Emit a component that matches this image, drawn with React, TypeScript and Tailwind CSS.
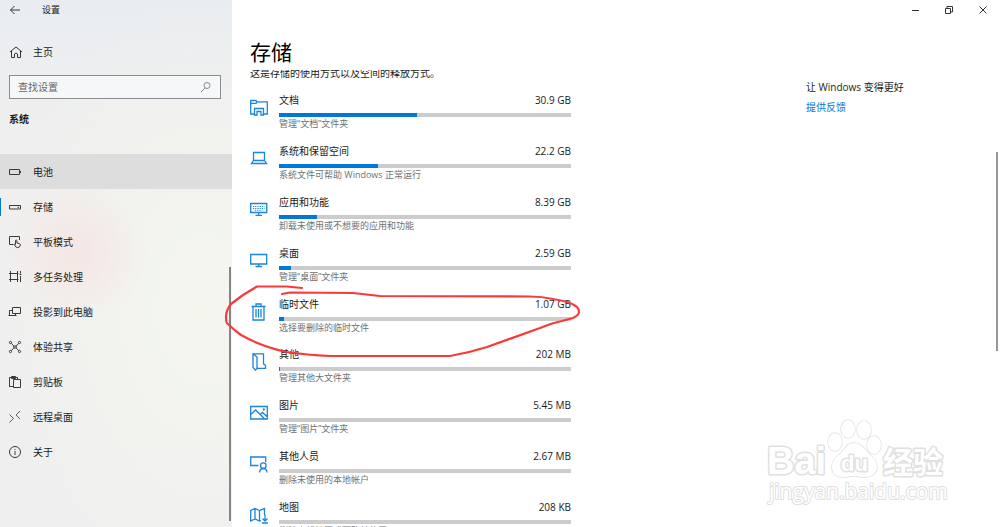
import React, { useState } from "react";

const navItems = [
  { id: "battery", label: "电池" },
  { id: "storage", label: "存储" },
  { id: "tablet", label: "平板模式" },
  { id: "multitask", label: "多任务处理" },
  { id: "project", label: "投影到此电脑" },
  { id: "share", label: "体验共享" },
  { id: "clipboard", label: "剪贴板" },
  { id: "remote", label: "远程桌面" },
  { id: "about", label: "关于" },
];

const storageItems = [
  { id: "documents", label: "文档", size: "30.9 GB", percent: 47.4, hint: "管理“文档”文件夹" },
  { id: "system", label: "系统和保留空间", size: "22.2 GB", percent: 34, hint: "系统文件可帮助 Windows 正常运行" },
  { id: "apps", label: "应用和功能", size: "8.39 GB", percent: 12.9, hint: "卸载未使用或不想要的应用和功能" },
  { id: "desktop", label: "桌面", size: "2.59 GB", percent: 4.1, hint: "管理“桌面”文件夹" },
  { id: "temp", label: "临时文件", size: "1.07 GB", percent: 1.8, hint: "选择要删除的临时文件" },
  { id: "other", label: "其他", size: "202 MB", percent: 0.3, hint: "管理其他大文件夹" },
  { id: "pictures", label: "图片", size: "5.45 MB", percent: 0, hint: "管理“图片”文件夹" },
  { id: "people", label: "其他人员", size: "2.67 MB", percent: 0, hint: "删除未使用的本地帐户" },
  { id: "maps", label: "地图", size: "208 KB", percent: 0, hint: "删除离线地图或更改其位置" },
];

const NavIcon = ({ id }: { id: string }) => (
  <svg
    viewBox="0 0 14 14"
    className="size-3.5 shrink-0"
    fill="none"
    stroke="#3a3a3a"
    strokeWidth="1"
    aria-hidden="true"
  >
    {id === "battery" && <path d="M1.5 4.5h10v5h-10zM12.5 6v2" />}
    {id === "storage" && <path d="M1.5 5.5h11v3.500h-11zM9.500 7.300h1.500" />}
    {id === "tablet" && (
      <path d="M5.500 9.500h-4v-8h10v3.500M7.500 9.500V5.500q.7-1 1.400 0V8l2.800.7q.8.3.6 1.300-.3 2.500-2.500 2.700-2.200 0-3.600-3.200.5-.8 1.300 0" />
    )}
    {id === "multitask" && <path d="M2.500 1v11M9.500 1v11M1 3.500h9.500M1 9.500h9.500M12.500 1v2.500M12.500 6v6M11.500 4.500h2" />}
    {id === "project" && <path d="M4.500 8.500v-6h8v6zM4.500 5.500h-3v4.500M7.500 8.500V10M.5 10.500h8" />}
    {id === "share" && (
      <>
        <path d="M3.300 3.300l2.500 2.700h2.400l2.500-2.700M3.300 10.700l2.500-2.700h2.400l2.500 2.700M5.800 6v2M8.200 6v2" />
        <circle cx="2.500" cy="2.500" r="1.100" />
        <circle cx="11.500" cy="2.500" r="1.100" />
        <circle cx="2.500" cy="11.500" r="1.100" />
        <circle cx="11.500" cy="11.500" r="1.100" />
      </>
    )}
    {id === "clipboard" && <path d="M5.500 11.500h-4v-9h8V4.500M3.500 3.500v-2h4v2zM5.500 4.500h7v8h-7z" />}
    {id === "remote" && <path d="M1.500 4.500l4 4-4 4M12 1L8 5l4 4" strokeWidth=".8" />}
    {id === "about" && (
      <>
        <circle cx="7" cy="7" r="5.500" />
        <path d="M7 6v4M7 4v1" />
      </>
    )}
  </svg>
);

const StorageIcon = ({ id }: { id: string }) => (
  <svg
    viewBox="0 0 18 18"
    className="mt-1.5 size-[18px] shrink-0"
    fill="none"
    stroke="#1b84dc"
    strokeWidth="1.3"
    aria-hidden="true"
  >
    {id === "documents" && (
      <path d="M4 15H.7V1.500H6l1 1.300h10.300V15H14M.7 4.300H6l1-1.500M4.500 16V9.500h9V16H11v-3.500H7V16z" />
    )}
    {id === "system" && <path d="M3.500 10.500v-8h11v8zM3.500 10.500l-2 3h15l-2-3" />}
    {id === "apps" && (
      <>
        <path d="M.7 2.500h16v9h-16zM8.700 11.500V14M5.500 14.300h6.500" />
        <path d="M3 5.500h11.500M3 7.500h11.500M5 9.300h7.500" strokeDasharray="1.200 1" strokeWidth="1" />
      </>
    )}
    {id === "desktop" && <path d="M.7 2.500h16v9.500h-16zM8.700 12v2.500M5.500 14.500h6.500" />}
    {id === "temp" && (
      <path d="M1.500 3.500h14M6 3.500V1h5v2.500M3 3.500v13.500h11V3.500M6 6v8.500M8.500 6v8.500M11 6v8.500" />
    )}
    {id === "other" && <path d="M3 .8h10.500v10l2 1.500v3H6.500M3 .8L7 4v11.500L5.500 17 3 14.500z" />}
    {id === "pictures" && (
      <>
        <path d="M.7 2.500h16.600V15H.7zM.7 10.500l5-4.500 9 9M10.500 10.500l2-2 5 4.500" />
        <circle cx="13.800" cy="5.500" r=".5" />
      </>
    )}
    {id === "people" && (
      <>
        <path d="M8.500 10.500H.7V2h15v5M9.500 17.500q.5-4 3.800-4t3.800 4" />
        <circle cx="13.300" cy="10.700" r="2.800" />
      </>
    )}
    {id === "maps" && (
      <path d="M11 14.500L9.500 15 5 13 .7 15V4.500L5 2.500l4.500 2 5-2V9M5 2.500V13M9.500 4.500V15M15 8.500V15M12.500 12.500L15 15l2.500-2.500M12 17h6" />
    )}
  </svg>
);

const Sidebar = () => {
  const [query, setQuery] = useState("");

  return (
    <aside className="relative w-[232px] shrink-0 bg-[radial-gradient(circle_at_76px_252px,#f5e6e4_0,#f5e6e400_72px),radial-gradient(ellipse_at_205px_310px,#f4f6ee_0,#f4f6ee00_210px),linear-gradient(#e9edf1_0,#efefef_130px,#efeff0_100%)]">
      <div className="flex h-5 items-center gap-5 pl-2">
        <button type="button" aria-label="返回">
          <svg viewBox="0 0 14 14" className="size-3.5" fill="none" stroke="#333" aria-hidden="true">
            <path d="M12 7H2.500M6.500 3l-4 4 4 4" />
          </svg>
        </button>
        <span className="text-[9px]">设置</span>
      </div>

      <a href="#home" className="mt-5 flex h-6 items-center gap-2.5 pl-[9px]">
        <svg viewBox="0 0 14 14" className="size-3.5" fill="none" stroke="#333" aria-hidden="true">
          <path d="M1 7l6-5 6 5M2.500 6v6.500h3V9q1.500-2 3 0v3.500h3V6" />
        </svg>
        主页
      </a>

      <label className="mt-[11px] ml-[9px] flex h-6 w-[212px] items-center border border-[#8c8d8e] bg-[#f6f7f8] px-2">
        <input
          type="text"
          aria-label="查找设置"
          placeholder="查找设置"
          value={query}
          onChange={(e) => setQuery(e.target.value)}
          className="min-w-0 flex-1 bg-transparent outline-none placeholder:text-[#666]"
        />
        <svg viewBox="0 0 12 12" className="size-3 shrink-0" fill="none" stroke="#888" aria-hidden="true">
          <circle cx="7" cy="4.500" r="3" />
          <path d="M5 7l-4 4" />
        </svg>
      </label>

      <h2 className="mt-3 pl-[9px] leading-4 font-bold">系统</h2>

      <nav className="mt-[27px]">
        {navItems.map((item, i) => (
          <a
            key={item.id}
            href={`#${item.id}`}
            className={`relative flex h-[35px] items-center gap-[11px] pl-2 ${i === 0 ? "bg-[#dcdddc]" : ""}`}
          >
            {item.id === "storage" && <span className="absolute left-0 h-[18px] w-px bg-[#0078d7]" />}
            <NavIcon id={item.id} />
            {item.label}
          </a>
        ))}
      </nav>

      {/* Scrollbar */}
      <span className="absolute right-px bottom-1.5 h-[254px] w-0.5 bg-[#858585]" />
    </aside>
  );
};

const WindowButtons = () => (
  <div className="flex h-5 items-center justify-end gap-5 pr-2.5 text-[#333]">
    <button type="button" aria-label="最小化">
      <svg viewBox="0 0 14 14" className="size-3.5" fill="none" stroke="currentColor" aria-hidden="true">
        <path d="M4 7.500h7" />
      </svg>
    </button>
    <button type="button" aria-label="还原">
      <svg viewBox="0 0 14 14" className="size-3.5" fill="none" stroke="currentColor" aria-hidden="true">
        <path d="M3.500 5.500h5v5h-5zM5 5.500v-2h5.500V9H8.500" />
      </svg>
    </button>
    <button type="button" aria-label="关闭">
      <svg viewBox="0 0 14 14" className="size-3.5" fill="none" stroke="currentColor" aria-hidden="true">
        <path d="M3.500 3.500l7 7M10.500 3.500l-7 7" />
      </svg>
    </button>
  </div>
);

const StorageRow = ({ item }: { item: (typeof storageItems)[number] }) => (
  <li>
    <button type="button" className="flex w-full gap-[11px] text-left">
      <StorageIcon id={item.id} />
      <span className="block min-w-0 flex-1">
        <span className="flex justify-between leading-[14px]">
          <span>{item.label}</span>
          <span>{item.size}</span>
        </span>
        <span className="mt-1.5 block h-1 bg-[#cccccc]">
          <span className="block h-1 bg-[#0078d7]" style={{ width: `${item.percent}%` }} />
        </span>
        <span className="block text-[9px] leading-[14px] text-[#707070]">{item.hint}</span>
      </span>
    </button>
  </li>
);

const Watermark = () => (
  <svg
    viewBox="0 0 190 100"
    className="pointer-events-none absolute right-[45px] bottom-[17px] h-[100px] w-[190px]"
    fill="#fff"
    stroke="#e0e0e0"
    strokeWidth="3"
    strokeLinejoin="round"
    paintOrder="stroke"
    aria-hidden="true"
  >
    <text x="2" y="64" fontSize="38" className="font-['Liberation_Sans',sans-serif] font-bold">Bai</text>
    <g strokeWidth="1.500">
      <ellipse cx="70" cy="32" rx="7" ry="9" />
      <ellipse cx="83" cy="19" rx="7" ry="9" />
      <ellipse cx="99" cy="20" rx="7" ry="9" />
      <ellipse cx="109" cy="35" rx="7" ry="9" />
      <path d="M89 33c8 0 11 7 16 12 5 4 7 7 7 12 0 7-6 10-12 10-5 0-7-1-11-1s-6 1-11 1c-6 0-11-3-11-10 0-5 2-8 7-12 6-5 7-12 15-12z" />
    </g>
    <text x="76" y="61" fontSize="22" className="font-['Liberation_Sans',sans-serif] font-bold">du</text>
    <text x="118" y="63" fontSize="30" className="font-['Noto_Sans_CJK_SC',sans-serif] font-bold">经验</text>
    <text x="4" y="89" fontSize="21" strokeWidth="2" className="font-['Open_Sans',sans-serif]">jingyan.baidu.com</text>
  </svg>
);

// Hand drawn ring around the temporary files row
const Marker = () => (
  <svg
    viewBox="0 0 360 76"
    className="pointer-events-none absolute top-[283px] left-[222px] h-[76px] w-[360px]"
    fill="none"
    stroke="#f93a3a"
    strokeWidth="2.200"
    strokeLinecap="round"
    strokeLinejoin="round"
    aria-hidden="true"
  >
    <path d="M80 5L65 3.500H35L21 12 9 21Q4 27 4 34T6 41Q12 47 19 52 28 57 38 61 50 66 65 69 85 72 108 73H228Q246 70 265 64L318 45Q330 40 340 38L351 35Q357 32 357 29T355 24Q350 19 331 16 320 13.500 308 13.500L158 13 131 10 68 9.500 60 11" />
  </svg>
);

export default function App() {
  return (
    <div className="relative flex h-screen overflow-hidden bg-white font-['Open_Sans','Noto_Sans_CJK_SC',sans-serif] text-[10px] leading-4 text-[#1a1a1a]">
      <Sidebar />

      <div className="flex min-w-0 flex-1 flex-col">
        <WindowButtons />
        <div className="flex min-h-0 flex-1 justify-between pl-[18px]">
          <main className="flex min-h-0 w-[321px] flex-col">
            <h1 className="mt-[18px] text-[21px] leading-7 text-black">存储</h1>
            <div className="mt-1 flex min-h-0 flex-1 flex-col overflow-hidden">
              <p className="-mt-[5px] leading-4">这是存储的使用方式以及空间的释放方式。</p>
              {/* The last row runs past the bottom of the window */}
              <ul className="mt-3 -mb-6 grid flex-1 auto-rows-fr">
                {storageItems.map((item) => (
                  <StorageRow key={item.id} item={item} />
                ))}
              </ul>
            </div>
          </main>

          <aside className="mt-[59px] w-[194px] leading-4">
            <p>让 Windows 变得更好</p>
            <a href="#feedback" className="mt-1 block text-[#0078d7]">
              提供反馈
            </a>
          </aside>
        </div>
      </div>

      {/* Page scrollbar */}
      <span className="absolute top-[152px] right-0.5 h-[199px] w-0.5 bg-[#999]" />
      <Watermark />
      <Marker />
    </div>
  );
}
